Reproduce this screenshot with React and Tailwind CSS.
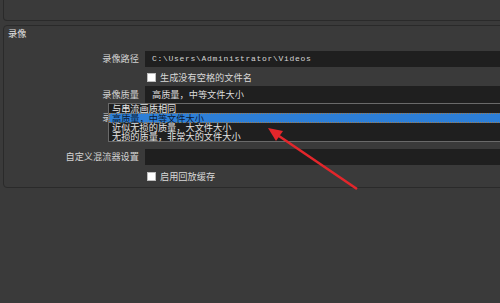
import React from "react";

const cjk = { fontFamily: '"Noto Sans CJK SC", "Noto Sans", sans-serif' };

const qualityOptions = [
  "与串流画质相同",
  "高质量，中等文件大小",
  "近似无损的质量，大文件大小",
  "无损的质量，非常大的文件大小",
];

const Label = ({ children }) => (
  <div className="w-[136px] shrink-0 pr-[1px] text-right text-[9.2px] text-[#d2d2d2]">{children}</div>
);

const Check = ({ label }) => (
  <div className="flex h-[11px] items-center">
    <div className="w-[141px] shrink-0" />
    <div className="ml-[2px] h-[9px] w-[9px] border border-[#bdbdbd] bg-white" />
    <span className="ml-[4px] text-[9.2px] leading-[11px] text-[#d8d8d8]">{label}</span>
  </div>
);

export default function App() {
  return (
    <div className="relative h-[303px] w-[500px] overflow-hidden bg-[#3a3a3a]" style={cjk}>
      {/* previous group, only its bottom edge shows */}
      <div className="ml-[3px] h-[21px] w-[520px] rounded-b-[4px] border border-t-0 border-[#2a2a2a]" />

      {/* 录像 group */}
      <div className="ml-[3px] mt-[4px] flex w-[520px] flex-col rounded-[4px] border border-[#2a2a2a] pb-[5px]">
        <div className="h-[14px] pl-[4px] text-[9.2px] leading-[14px] text-[#e0e0e0]">录像</div>

        <div className="mt-[11px] flex h-[16px] items-center">
          <Label>录像路径</Label>
          <div className="ml-[5px] flex h-full flex-1 items-center bg-[#1f1f1f] pl-[7px] font-mono text-[8px] tracking-[0.7px] text-[#d4d4d4]">
            C:\Users\Administrator\Videos
          </div>
        </div>

        <div className="mt-[5px]">
          <Check label="生成没有空格的文件名" />
        </div>

        <div className="mt-[3px] flex h-[17px] items-center">
          <Label>录像质量</Label>
          <div className="ml-[5px] flex h-full flex-1 items-center bg-[#1f1f1f] pl-[7px] text-[9.2px] text-[#dcdcdc]">
            高质量，中等文件大小
          </div>
        </div>

        <div className="mt-[5px] flex h-[19px] items-center">
          <Label>录像格式</Label>
          <div className="ml-[5px] h-full flex-1 bg-[#1f1f1f]" />
        </div>

        <div className="mt-[22px] flex h-[16px] items-center">
          <Label>自定义混流器设置</Label>
          <div className="ml-[5px] h-full flex-1 bg-[#1f1f1f]" />
        </div>

        <div className="mt-[6px]">
          <Check label="启用回放缓存" />
        </div>
      </div>

      {/* open quality dropdown */}
      <div className="absolute left-[108px] top-[103px] flex h-[39px] w-[400px] flex-col border border-[#6a6a6a] bg-[#1f1f1f]">
        {qualityOptions.map((opt, i) => (
          <div
            key={opt}
            className={
              i === 1
                ? "flex h-[10px] items-center border border-dotted border-[#a07a48] bg-[#2d7fd7] pl-[2px] text-[9.2px] leading-[9px] text-[#0c1830]"
                : "flex h-[9.5px] items-center pl-[3px] text-[9.2px] leading-[9px] text-[#e4e4e4]"
            }
          >
            {opt}
          </div>
        ))}
      </div>

      {/* annotation arrow */}
      <svg className="pointer-events-none absolute inset-0" width="500" height="303">
        <line x1="357" y1="189" x2="276" y2="134" stroke="#e3262b" strokeWidth="2.5" />
        <polygon points="268,128 283,131 276,141" fill="#e3262b" />
      </svg>
    </div>
  );
}
